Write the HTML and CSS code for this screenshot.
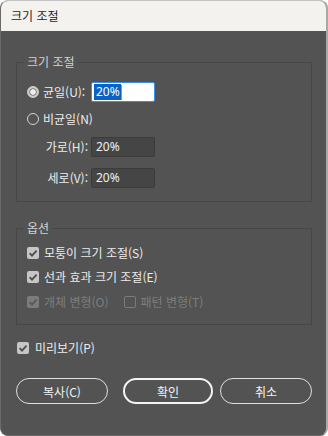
FILE: index.html
```html
<!DOCTYPE html>
<html lang="ko">
<head>
    <meta charset="UTF-8">
    <meta name="viewport" content="width=device-width, initial-scale=1.0">
    <title>크기 조절</title>
    <link rel="stylesheet" href="styles.css">
</head>
<body>
    <div class="window">
        <div class="titlebar">크기 조절</div>
        <div class="content">
            <fieldset class="group group-scale">
                <legend>크기 조절</legend>
                <div class="row row-uniform">
                    <span class="radio checked"></span>
                    <span class="lbl-radio">균일(U):</span>
                    <div class="field field-active"><span class="sel">20%</span><span class="caret"></span></div>
                </div>
                <div class="row row-nonuniform">
                    <span class="radio"></span>
                    <span>비균일(N)</span>
                </div>
                <div class="row row-h">
                    <span class="lbl-wide">가로(H):</span>
                    <div class="field">20%</div>
                </div>
                <div class="row row-v">
                    <span class="lbl-wide">세로(V):</span>
                    <div class="field">20%</div>
                </div>
            </fieldset>

            <fieldset class="group group-options">
                <legend>옵션</legend>
                <div class="check-row">
                    <span class="check checked"><svg viewBox="0 0 12 12"><path d="M2.6 6.2 L5 8.6 L9.6 3.6"/></svg></span>
                    <span>모퉁이 크기 조절(S)</span>
                </div>
                <div class="check-row">
                    <span class="check checked"><svg viewBox="0 0 12 12"><path d="M2.6 6.2 L5 8.6 L9.6 3.6"/></svg></span>
                    <span>선과 효과 크기 조절(E)</span>
                </div>
                <div class="check-row disabled">
                    <span class="check checked"><svg viewBox="0 0 12 12"><path d="M2.6 6.2 L5 8.6 L9.6 3.6"/></svg></span>
                    <span>개체 변형(O)</span>
                    <span class="check empty second"></span>
                    <span>패턴 변형(T)</span>
                </div>
            </fieldset>

            <div class="check-row preview">
                <span class="check checked"><svg viewBox="0 0 12 12"><path d="M2.6 6.2 L5 8.6 L9.6 3.6"/></svg></span>
                <span>미리보기(P)</span>
            </div>

            <div class="buttons">
                <button class="btn btn-copy">복사(C)</button>
                <button class="btn btn-ok">확인</button>
                <button class="btn btn-cancel">취소</button>
            </div>
        </div>
    </div>
</body>
</html>
```

FILE: styles.css
```css
body {
    margin: 0;
    background: #ffffff;
    font-family: "Noto Sans CJK KR", "Noto Sans", sans-serif;
    font-size: 12px;
    line-height: 16px;
}
.window {
    width: 328px;
    height: 436px;
    box-sizing: border-box;
    background: #535353;
    border: 1px solid #6a6a6a;
    border-right: 2px solid #a8a8a8;
    border-top-color: #c4c4c4;
    border-radius: 8px;
    overflow: hidden;
    display: flex;
    flex-direction: column;
}
.titlebar {
    height: 30px;
    flex: none;
    background: #f4f2ee;
    color: #1c1c1c;
    padding-left: 10px;
    display: flex;
    align-items: center;
}
.content {
    padding: 0 14px 0 15px;
    color: #ececec;
}
.group {
    margin: 0;
    border: 1px solid #474747;
    padding: 12px 10px 13px 10px;
    min-width: 0;
}
.group legend {
    padding: 0 3px;
    margin-left: -3px;
    color: #d2d2d2;
    line-height: 16px;
}
.group-scale {
    margin-top: 23px;
}
.group-options {
    margin-top: 18px;
    padding-top: 8px;
}
.row {
    display: flex;
    align-items: center;
    height: 20px;
}
.row-nonuniform {
    margin-top: 7px;
}
.row-h {
    margin-top: 8px;
}
.row-v {
    margin-top: 11px;
}
.radio {
    width: 12px;
    height: 12px;
    box-sizing: border-box;
    border: 1px solid #d4d4d4;
    border-radius: 50%;
    margin-right: 4px;
    flex: none;
}
.radio.checked {
    border-color: #cfcfcf;
    background: radial-gradient(circle, #ececec 0 2.5px, #8f8f8f 3px 3.6px, #cdcdcd 4px);
}
.lbl-radio {
    width: 45px;
    margin-right: 3px;
    white-space: nowrap;
}
.lbl-wide {
    width: 61px;
    margin-right: 3px;
    text-align: right;
    white-space: nowrap;
}
.field {
    width: 64px;
    height: 20px;
    box-sizing: border-box;
    background: #454545;
    border: 1px solid #3c3c3c;
    border-radius: 2px;
    padding-left: 4px;
    font-family: "Noto Sans", sans-serif;
    font-size: 12px;
    color: #f0f0f0;
    display: flex;
    align-items: center;
}
.field-active {
    background: #ffffff;
    border-color: #3b8fe4;
    padding-left: 2px;
}
.sel {
    background: #0a62c4;
    color: #ffffff;
    padding: 0 1px 0 2px;
    line-height: 16px;
}
.caret {
    width: 1px;
    height: 15px;
    background: #f07a28;
}
.check-row {
    display: flex;
    align-items: center;
    height: 18px;
}
.check-row + .check-row {
    margin-top: 6px;
}
.group-options .check-row:last-child {
    margin-top: 7px;
}
.check {
    width: 12px;
    height: 12px;
    box-sizing: border-box;
    border-radius: 2px;
    background: #c6c6c6;
    margin-right: 5px;
    flex: none;
    display: flex;
}
.check svg {
    width: 12px;
    height: 12px;
}
.check path {
    fill: none;
    stroke: #4e4e4e;
    stroke-width: 1.8;
}
.disabled {
    color: #7e7e7e;
}
.disabled .check.checked {
    background: #7b7b7b;
}
.disabled .check path {
    stroke: #585858;
}
.check.empty {
    background: none;
    border: 1px solid #7b7b7b;
}
.check.second {
    margin-left: 15px;
}
.preview {
    margin-top: 14px;
    padding-left: 1px;
}
.preview .check {
    margin-right: 6px;
}
.buttons {
    display: flex;
    margin-top: 21px;
}
.btn {
    height: 26px;
    box-sizing: border-box;
    border: 1.5px solid #e0e0e0;
    border-radius: 13px;
    background: transparent;
    color: #f4f4f4;
    font-family: "Noto Sans CJK KR", "Noto Sans", sans-serif;
    font-size: 12px;
    padding: 0;
}
.btn-copy {
    width: 92px;
    margin-right: 15px;
}
.btn-ok {
    width: 90px;
    border: 2px solid #f4f4f4;
    margin-right: 7px;
}
.btn-cancel {
    width: 92px;
}
```
